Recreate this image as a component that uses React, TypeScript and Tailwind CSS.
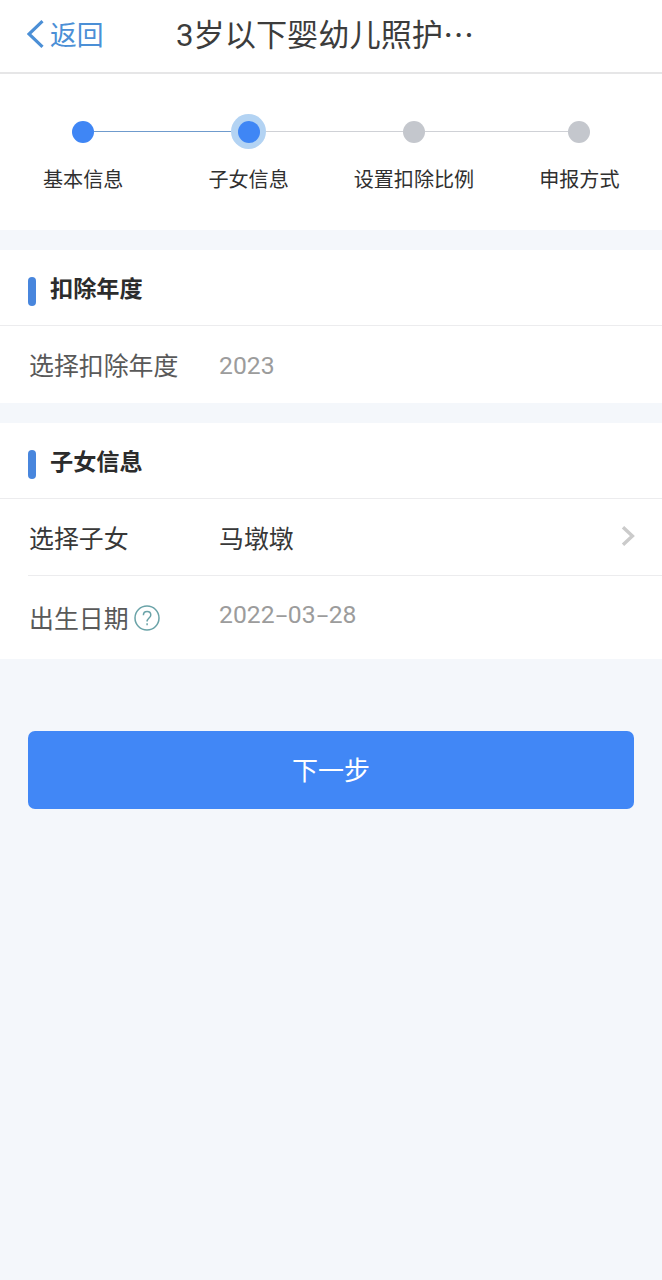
import React from 'react'

type StepState = 'done' | 'current' | 'pending'

interface Step {
  label: string
  state: StepState
}

const steps: Step[] = [
  { label: '基本信息', state: 'done' },
  { label: '子女信息', state: 'current' },
  { label: '设置扣除比例', state: 'pending' },
  { label: '申报方式', state: 'pending' },
]

// 每个步骤左右两侧的连接线
const lineColor = (visible: boolean, active: boolean) => {
  if (!visible) return 'bg-transparent'
  return active ? 'bg-[#6f9bcd]' : 'bg-[#cfd1d6]'
}

const StepDot = ({ state }: { state: StepState }) => {
  if (state === 'current') {
    return (
      <div className="flex size-[35px] shrink-0 items-center justify-center rounded-full bg-[#b3d3f3]">
        <div className="size-[22px] rounded-full bg-[#3f86f5]" />
      </div>
    )
  }
  return (
    <div className={`size-[22px] shrink-0 rounded-full ${state === 'done' ? 'bg-[#3f86f5]' : 'bg-[#c4c7cd]'}`} />
  )
}

const StepBar = () => (
  <div className="grid h-[156px] grid-cols-4 bg-white pt-[40px] pl-[0.5px]">
    {steps.map((step, i) => (
      <div key={step.label} className="flex flex-col items-center">
        <div className="flex h-[35px] w-full items-center">
          <div className={`h-[1.5px] flex-1 ${lineColor(i > 0, step.state !== 'pending')}`} />
          <StepDot state={step.state} />
          <div className={`h-[1.5px] flex-1 ${lineColor(i < steps.length - 1, step.state === 'done')}`} />
        </div>
        <span className="mt-[15px] text-[20.1px] leading-[30px] whitespace-nowrap text-[#303030]">{step.label}</span>
      </div>
    ))}
  </div>
)

const SectionTitle = ({ title }: { title: string }) => (
  <div className="flex h-[76px] items-center border-b border-[#ececee] pl-[28px]">
    <div className="mt-[8px] h-[29px] w-[8px] rounded-full bg-[#4886dd]" />
    <h2 className="mb-[2px] ml-[14px] text-[23.2px] leading-[34px] font-bold text-[#2c2c2c]">{title}</h2>
  </div>
)

// 数字等宽排列，连字符比默认字形更宽
const DateText = ({ value }: { value: string }) => (
  <span className="flex font-['Roboto','Noto_Sans_CJK_SC',sans-serif] text-[24.7px]">
    {value.split('').map((ch, i) => (
      <span key={i} className={ch === '-' ? 'w-[13.2px] scale-x-[1.7] text-center' : 'w-[13.9px]'}>
        {ch}
      </span>
    ))}
  </span>
)

export default function App() {
  return (
    <div className="min-h-[1280px] w-full bg-[#f4f7fb] font-['Noto_Sans_CJK_SC',sans-serif]">
      <header className="flex h-[74px] items-start border-b-2 border-[#e6e6e7] bg-white">
        <button className="flex h-[68px] w-[176px] items-center pl-[27px] text-[#4b8fd6]">
          <svg width="17" height="28" viewBox="0 0 17 28" fill="none" stroke="currentColor" strokeWidth="3.2">
            <path d="M15.5 1.2 2 14l13.5 12.8" />
          </svg>
          <span className="mb-px ml-[6px] text-[26.8px] leading-[40px]">返回</span>
        </button>
        <h1 className="text-[31.2px] leading-[65px] text-[#3c3c3c]">
          <span className="font-['Roboto']">3</span>岁以下婴幼儿照护…
        </h1>
      </header>

      <StepBar />

      <section className="mt-[20px] bg-white">
        <SectionTitle title="扣除年度" />
        <div className="flex h-[77px] items-center pl-[29px] text-[24.9px] leading-[36px]">
          <span className="mb-[2px] w-[190px] text-[#595959]">选择扣除年度</span>
          <span className="mt-[2px] text-[#9c9c9c]">
            <DateText value="2023" />
          </span>
        </div>
      </section>

      <section className="mt-[20px] bg-white">
        <SectionTitle title="子女信息" />
        <div className="ml-[28px] flex h-[77px] items-center border-b border-[#ececee] pr-[27px] pl-[1px] text-[24.9px] leading-[36px] text-[#383838]">
          <span className="mb-px w-[190px]">选择子女</span>
          <span className="mb-px">马墩墩</span>
          <svg className="mb-[2px] ml-auto" width="14" height="20" viewBox="0 0 14 20" fill="none" stroke="#cbcbcb" strokeWidth="3.4">
            <path d="m2 1.2 9.4 8.8L2 18.8" />
          </svg>
        </div>
        <div className="flex h-[83px] items-center pl-[29px] text-[24.9px] leading-[36px]">
          <div className="flex w-[190px] items-center text-[#595959]">
            <span className="mb-[2px]">出生日期</span>
            <svg className="ml-[5px]" width="26" height="26" viewBox="0 0 26 26" fill="none" stroke="#6aa3a8" strokeWidth="1.5">
              <circle cx="13" cy="13" r="12" />
              <path d="M9.4 10.2c0-2.2 1.5-3.7 3.7-3.7s3.7 1.4 3.7 3.5c0 2.9-3.7 3.2-3.7 6.5" />
              <path d="M13.1 18.2v2" />
            </svg>
          </div>
          <div className="mb-[6px] text-[#9c9c9c]">
            <DateText value="2022-03-28" />
          </div>
        </div>
      </section>

      <div className="px-[28px] pt-[72px]">
        <button className="h-[78px] w-full rounded-[7px] bg-[#4187f6] pb-[4px] text-[26px] text-white">下一步</button>
      </div>
    </div>
  )
}
